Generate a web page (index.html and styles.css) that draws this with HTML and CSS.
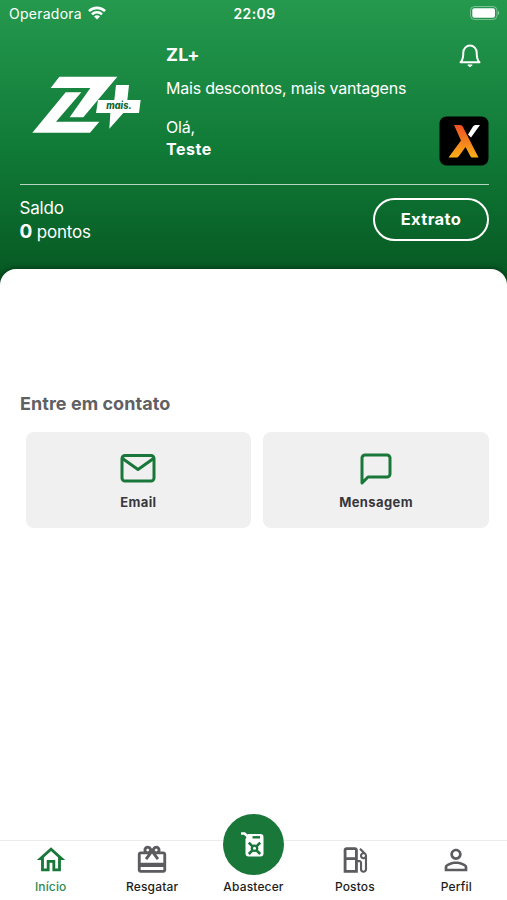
FILE: index.html
```html
<!DOCTYPE html>
<html lang="pt-BR">
<head>
    <meta charset="UTF-8">
    <meta name="viewport" content="width=device-width, initial-scale=1.0">
    <title>ZL+</title>
    <link rel="stylesheet" href="styles.css">
</head>
<body>
    <header>
        <div class="status-bar">
            <span class="carrier">
                <span class="carrier-name">Operadora</span>
                <svg width="18" height="14" viewBox="0 0 18 14" fill="none" stroke="#fff" stroke-width="2.6">
                    <path d="M1 5.2a11.3 11.3 0 0 1 16 0M4 8.3a7.1 7.1 0 0 1 10 0"/>
                    <path d="M9 13.6 6 10.6a4.3 4.3 0 0 1 6 0z" fill="#fff" stroke="none"/>
                </svg>
            </span>
            <span class="clock">22:09</span>
            <svg class="battery" width="30" height="14" viewBox="0 0 30 14">
                <rect x=".5" y=".5" width="26.5" height="13" rx="4" fill="none" stroke="#fff" stroke-opacity=".4"/>
                <rect x="2.3" y="2.3" width="22.7" height="9.4" rx="2" fill="#fff"/>
                <path d="M28 5v4c1.6-.6 1.6-3.4 0-4z" fill="#fff" fill-opacity=".5"/>
            </svg>
        </div>

        <div class="brand">
            <svg class="logo" width="140" height="90" viewBox="0 0 420 270">
                <g fill="#fff">
                    <path d="M118 50H292L190 172H149L211 84H92Z"/>
                    <path d="M137 97H184L108 185H238L210 218H37Z"/>
                    <path d="M288 75H327L322 120H362L357 159H310L268 206L271 159H228L234 120H283Z"/>
                </g>
                <text x="259" y="146" textLength="76" lengthAdjust="spacingAndGlyphs">mais.</text>
            </svg>
            <div class="greeting">
                <h1>ZL+</h1>
                <p class="slogan">Mais descontos, mais vantagens</p>
                <p class="hello">Olá,</p>
                <p class="user-name">Teste</p>
            </div>
            <div class="side">
                <svg class="bell" width="22" height="24" viewBox="0 0 22 24" fill="none" stroke="#fff" stroke-width="2" stroke-linecap="round" stroke-linejoin="round">
                    <path d="M1.5 18.3C4 16.3 4.3 13 4.3 8.5a6.7 6.9 0 0 1 13.4 0c0 4.5.3 7.8 2.8 9.8z"/>
                    <path d="M9 21.3c.9 1.6 3.1 1.6 4 0z" fill="#fff" stroke-width="1"/>
                </svg>
                <svg class="partner" width="50" height="50" viewBox="0 0 50 50">
                    <defs>
                        <linearGradient id="flame" x1="0" y1="0" x2="0" y2="1">
                            <stop offset="0" stop-color="#ee4f24"/>
                            <stop offset="1" stop-color="#fbb016"/>
                        </linearGradient>
                    </defs>
                    <rect x=".5" y=".5" width="49" height="49" rx="7" fill="#000"/>
                    <path d="M15 9h6.500q1.500 0 2.200 1.500L39.500 41.500h-6q-1.500 0-2.200-1.500L26.500 31 20 40q-1 1.500-2.500 1.500H9.500L22 24.500z" fill="url(#flame)"/>
                    <path d="M29 18.500 34 10.500q1-1.500 2.500-1.500h4.500L32 21.500z" fill="#fff"/>
                </svg>
            </div>
        </div>

        <div class="balance">
            <div class="points">
                <p>Saldo</p>
                <p><strong>0</strong> pontos</p>
            </div>
            <button class="statement-btn">Extrato</button>
        </div>
    </header>

    <main>
        <h2>Entre em contato</h2>
        <div class="contact-list">
            <a class="contact-item">
                <svg width="36" height="36" viewBox="0 0 36 36" fill="none" stroke="#19773a" stroke-width="3" stroke-linejoin="round">
                    <rect x="2" y="5.5" width="32" height="25.5" rx="3"/>
                    <path d="M2.5 8.5 18 19.5 33.5 8.5"/>
                </svg>
                <span>Email</span>
            </a>
            <a class="contact-item">
                <svg width="36" height="36" viewBox="0 0 36 36" fill="none" stroke="#19773a" stroke-width="3" stroke-linejoin="round">
                    <path d="M4 33V8a3 3 0 0 1 3-3h22a3 3 0 0 1 3 3v16a3 3 0 0 1-3 3H10z"/>
                </svg>
                <span>Mensagem</span>
            </a>
        </div>
    </main>

    <nav>
        <a class="tab active">
            <svg width="34" height="34" viewBox="0 0 24 24" fill="currentColor">
                <path d="M12 5.69l5 4.5V18h-2v-6H9v6H7v-7.81l5-4.5M12 3L2 12h3v8h6v-6h2v6h6v-8h3L12 3z"/>
            </svg>
            <span>Início</span>
        </a>
        <a class="tab">
            <svg width="34" height="34" viewBox="0 0 24 24" fill="currentColor">
                <path d="M20 6h-2.18c.11-.31.18-.65.18-1 0-1.66-1.34-3-3-3-1.05 0-1.96.54-2.5 1.35l-.5.67-.5-.68C10.96 2.54 10.05 2 9 2 7.34 2 6 3.34 6 5c0 .35.07.69.18 1H4c-1.11 0-1.99.89-1.99 2L2 19c0 1.11.89 2 2 2h16c1.11 0 2-.89 2-2V8c0-1.11-.89-2-2-2zm-5-2c.55 0 1 .45 1 1s-.45 1-1 1-1-.45-1-1 .45-1 1-1zM9 4c.55 0 1 .45 1 1s-.45 1-1 1-1-.45-1-1 .45-1 1-1zm11 15H4v-2h16v2zm0-5H4V8h5.08L7 10.83 8.62 12 11 8.76l1-1.36 1 1.36L15.38 12 17 10.83 14.92 8H20v6z"/>
            </svg>
            <span>Resgatar</span>
        </a>
        <a class="tab tab-main">
            <div class="fuel-circle">
                <svg width="30" height="30" viewBox="0 0 30 30">
                    <path d="M9 4H21.5a3 3 0 0 1 3 3V23.5a3 3 0 0 1-3 3H9.5a3 3 0 0 1-3-3V9z" fill="#fff"/>
                    <path d="M2 3.500h3.500l4.500 4" fill="none" stroke="#fff" stroke-width="2.6"/>
                    <path d="M13.500 7.300h7.500" stroke="#19773a" stroke-width="2.4"/>
                    <path d="M9.800 12.700 21.200 24M21.200 12.700 9.800 24" stroke="#19773a" stroke-width="2.6"/>
                    <circle cx="15.5" cy="18.3" r="3.8" fill="#19773a"/>
                    <circle cx="15.5" cy="18.3" r="1.5" fill="#fff"/>
                </svg>
            </div>
            <span>Abastecer</span>
        </a>
        <a class="tab">
            <svg width="34" height="34" viewBox="0 0 24 24" fill="currentColor">
                <path d="M19.77 7.23l.01-.01-3.72-3.72L15 4.56l2.11 2.11c-.94.36-1.61 1.26-1.61 2.33 0 1.38 1.12 2.5 2.5 2.5.36 0 .69-.08 1-.21v7.21c0 .55-.45 1-1 1s-1-.45-1-1V14c0-1.1-.9-2-2-2h-1V5c0-1.1-.9-2-2-2H6c-1.1 0-2 .9-2 2v16h10v-7.5h1.5v5c0 1.38 1.12 2.5 2.5 2.5s2.5-1.12 2.5-2.5V9c0-.69-.28-1.32-.73-1.77zM12 13.5V19H6v-7h6v1.5zm0-3.5H6V5h6v5zm6 0c-.55 0-1-.45-1-1s.45-1 1-1 1 .45 1 1-.45 1-1 1z"/>
            </svg>
            <span>Postos</span>
        </a>
        <a class="tab">
            <svg width="34" height="34" viewBox="0 0 24 24" fill="currentColor">
                <path d="M12 5.9c1.16 0 2.1.94 2.1 2.1s-.94 2.1-2.1 2.1S9.9 9.16 9.9 8s.94-2.1 2.1-2.1m0 9c2.97 0 6.1 1.46 6.1 2.1v1.1H5.9V17c0-.64 3.13-2.1 6.1-2.1M12 4C9.79 4 8 5.79 8 8s1.79 4 4 4 4-1.79 4-4-1.79-4-4-4zm0 9c-2.67 0-8 1.34-8 4v3h16v-3c0-2.66-5.33-4-8-4z"/>
            </svg>
            <span>Perfil</span>
        </a>
    </nav>
</body>
</html>
```
FILE: styles.css
```css
:root {
    --green: #19773a;
    --card-bg: #f0f0f0;
    --gray: #5f5f64;
    --text-color: #37373c;
    --sheet-radius: 16px;
}

* {
    box-sizing: border-box;
}

body {
    font-family: Inter, 'Liberation Sans', sans-serif;
    background-color: #fff;
    margin: 0;
    height: 100vh;
    display: flex;
    flex-direction: column;
    overflow: hidden;
}

h1, h2, p {
    margin: 0;
}

svg {
    display: block;
    flex-shrink: 0;
}

header {
    height: 286px;
    background: linear-gradient(#25994e 0, #107a37 150px, #075b24 269px, #05481b 286px);
    color: #fff;
}

.status-bar {
    display: grid;
    grid-template-columns: 1fr auto 1fr;
    align-items: center;
    height: 26px;
    padding: 0 7px 0 9px;
    font-size: 14px;
}

.carrier {
    display: flex;
    align-items: center;
    gap: 6px;
}

.carrier-name {
    letter-spacing: 0.25px;
}

.clock {
    font-weight: 600;
    letter-spacing: 0.4px;
}

.battery {
    justify-self: end;
}

.brand {
    display: flex;
    height: 159px;
    margin: 0 18px 0 20px;
    padding-top: 2px;
    border-bottom: 1px solid rgba(255, 255, 255, 0.7);
}

.logo {
    margin-top: 32px;
}

.logo text {
    font-size: 28px;
    font-weight: 800;
    font-style: italic;
    fill: #12652f;
}

.greeting {
    flex: 1;
    padding: 16px 0 0 6px;
    font-size: 16px;
    line-height: 22px;
}

.greeting h1 {
    font-size: 18px;
    font-weight: 700;
    line-height: 22px;
    letter-spacing: 0.2px;
}

.slogan {
    margin-top: 11px;
    letter-spacing: -0.22px;
}

.hello {
    margin-top: 17px;
    letter-spacing: -0.2px;
}

.user-name {
    font-weight: 700;
    letter-spacing: 0.5px;
}

.side {
    display: flex;
    flex-direction: column;
    align-items: flex-end;
    padding-top: 16px;
}

.bell {
    margin-right: 8px;
}

.partner {
    margin-top: 48px;
}

.balance {
    display: flex;
    justify-content: space-between;
    padding: 12px 18px 0 19.5px;
    font-size: 17px;
    line-height: 23px;
    letter-spacing: -0.2px;
}

.points strong {
    font-size: 19px;
}

.statement-btn {
    width: 116px;
    height: 43px;
    margin-top: 1px;
    padding: 0 0 2px;
    border: 2px solid #fff;
    border-radius: 22px;
    background: none;
    color: #fff;
    font-family: inherit;
    font-size: 16.5px;
    font-weight: 700;
    letter-spacing: 0.4px;
}

main {
    flex: 1;
    margin-top: -17px;
    padding: 122px 18px 0 20px;
    background-color: #fff;
    border-radius: var(--sheet-radius) var(--sheet-radius) 0 0;
    box-shadow: 0 -1px 5px rgba(0, 0, 0, 0.4);
}

main h2 {
    font-size: 18px;
    line-height: 25px;
    font-weight: 700;
    letter-spacing: 0.05px;
    color: var(--gray);
}

.contact-list {
    display: flex;
    gap: 12px;
    margin: 16px 0 0 5.5px;
}

.contact-item {
    flex: 1;
    display: flex;
    flex-direction: column;
    align-items: center;
    height: 96px;
    padding-top: 18px;
    border-radius: 8px;
    background-color: var(--card-bg);
    font-size: 13px;
    font-weight: 700;
    line-height: 16px;
    letter-spacing: 0.4px;
    color: var(--text-color);
}

.contact-item span {
    margin-top: 8px;
}

nav {
    display: flex;
    height: 60px;
    border-top: 1px solid #ececec;
    background-color: #fff;
}

.tab {
    flex: 1;
    display: flex;
    flex-direction: column;
    align-items: center;
    padding-top: 2px;
    font-size: 12px;
    font-weight: 500;
    line-height: 16px;
    letter-spacing: 0.15px;
    color: #5b5b60;
}

.tab span {
    margin-top: 2px;
    color: #1d1d20;
}

.tab.active {
    color: var(--green);
}

.tab.active span {
    color: #2f8a50;
}

/* The middle button rises above the bar */
.tab-main {
    padding-top: 0;
    margin-top: -27px;
}

.tab-main span {
    margin-top: 4px;
}

.fuel-circle {
    width: 61px;
    height: 61px;
    flex-shrink: 0;
    display: flex;
    align-items: center;
    justify-content: center;
    border-radius: 50%;
    background-color: var(--green);
}
```
